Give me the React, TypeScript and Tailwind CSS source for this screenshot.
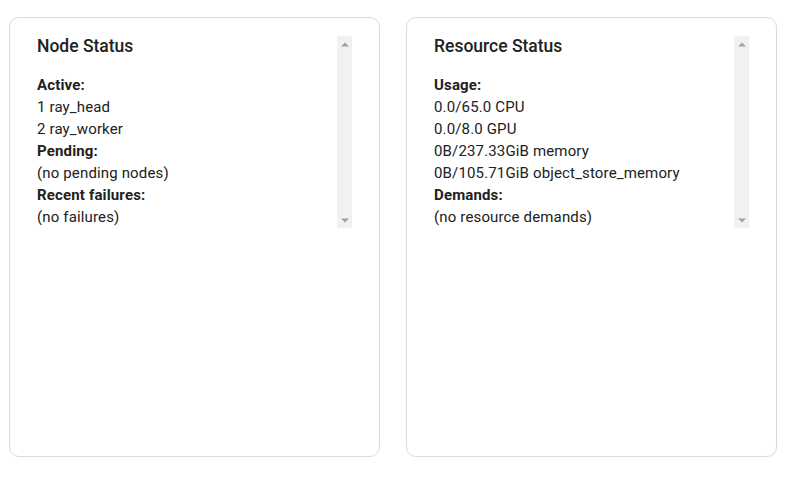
const nodeLines: [string, boolean][] = [
  ['Active:', true],
  ['1 ray_head', false],
  ['2 ray_worker', false],
  ['Pending:', true],
  ['(no pending nodes)', false],
  ['Recent failures:', true],
  ['(no failures)', false],
]

const resourceLines: [string, boolean][] = [
  ['Usage:', true],
  ['0.0/65.0 CPU', false],
  ['0.0/8.0 GPU', false],
  ['0B/237.33GiB memory', false],
  ['0B/105.71GiB object_store_memory', false],
  ['Demands:', true],
  ['(no resource demands)', false],
]

function FakeScrollbar() {
  return (
    <div className="w-[15px] shrink-0 bg-[#f1f1f1] flex flex-col items-center justify-between pt-[6px] pb-[5px]">
      <svg width="8" height="5" viewBox="0 0 8 5">
        <polygon points="4,0.5 8,4.5 0,4.5" fill="#a0a0a0" />
      </svg>
      <svg width="8" height="5" viewBox="0 0 8 5">
        <polygon points="0,0.5 8,0.5 4,4.5" fill="#a0a0a0" />
      </svg>
    </div>
  )
}

function StatusCard({ title, lines }: { title: string; lines: [string, boolean][] }) {
  return (
    <div className="w-[371px] h-[440px] shrink-0 border border-[#d3dce8] rounded-[10px] bg-white pl-[27px] pr-[27px] pt-[18px]">
      <div className="flex h-[192px]">
        <div className="flex-1 overflow-hidden">
          <h2 className="text-[17.5px] leading-[20px] font-medium text-[#212121]">{title}</h2>
          <div className="mt-[18px] text-[15px] leading-[22px] tracking-[0.15px] text-[#212121]">
            {lines.map(([text, bold], i) => (
              <div key={i} className={bold ? 'font-bold' : ''}>
                {text}
              </div>
            ))}
          </div>
        </div>
        <FakeScrollbar />
      </div>
    </div>
  )
}

export default function App() {
  return (
    <div className="w-[792px] h-[479px] bg-white font-['Roboto',sans-serif] pt-[17px] pl-[9px] flex gap-[26px]">
      <StatusCard title="Node Status" lines={nodeLines} />
      <StatusCard title="Resource Status" lines={resourceLines} />
    </div>
  )
}
